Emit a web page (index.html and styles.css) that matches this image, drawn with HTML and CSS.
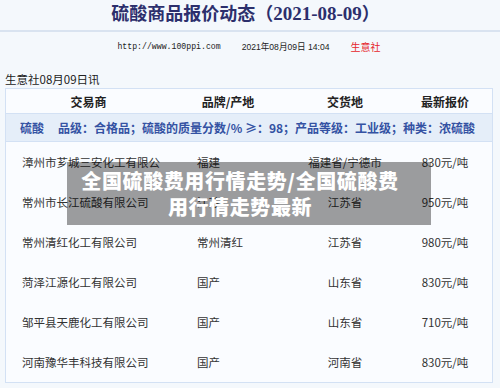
FILE: index.html
```html
<!DOCTYPE html>
<html lang="zh-CN">
<head>
<meta charset="utf-8">
<title>硫酸商品报价动态</title>
<link rel="stylesheet" href="styles.css">
</head>
<body>
<div class="page">
  <h1 class="title">硫酸商品报价动态<span class="paren">（</span><span class="num">2021-08-09</span><span class="paren">）</span></h1>
  <div class="meta">
    <span class="url">http://www.100ppi.com</span>
    <span class="date">2021年08月09日 14:04</span>
    <span class="src">生意社</span>
  </div>
  <p class="lead">生意社08月09日讯</p>
  <div class="table">
    <div class="row head">
      <div class="c1">交易商</div>
      <div class="c2">品牌/产地</div>
      <div class="c3">交货地</div>
      <div class="c4">最新报价</div>
    </div>
    <div class="band"><span class="prod">硫酸</span><span>品级：合格品；硫酸的质量分数/% ≥：98；产品等级：工业级；种类：浓硫酸</span></div>
    <div class="row">
      <div class="c1">漳州市芗城三安化工有限公</div>
      <div class="c2">福建</div>
      <div class="c3">福建省/宁德市</div>
      <div class="c4">830元/吨</div>
    </div>
    <div class="row">
      <div class="c1">常州市长江硫酸有限公司</div>
      <div class="c2">江苏</div>
      <div class="c3">江苏省</div>
      <div class="c4">950元/吨</div>
    </div>
    <div class="row">
      <div class="c1">常州清红化工有限公司</div>
      <div class="c2">常州清红</div>
      <div class="c3">江苏省</div>
      <div class="c4">980元/吨</div>
    </div>
    <div class="row">
      <div class="c1">菏泽江源化工有限公司</div>
      <div class="c2">国产</div>
      <div class="c3">山东省</div>
      <div class="c4">830元/吨</div>
    </div>
    <div class="row">
      <div class="c1">邹平县天鹿化工有限公司</div>
      <div class="c2">国产</div>
      <div class="c3">山东省</div>
      <div class="c4">710元/吨</div>
    </div>
    <div class="row">
      <div class="c1">河南豫华丰科技有限公司</div>
      <div class="c2">国产</div>
      <div class="c3">河南省</div>
      <div class="c4">830元/吨</div>
    </div>
  </div>
  <div class="overlay">全国硫酸费用行情走势/全国硫酸费<br>用行情走势最新</div>
</div>
</body>
</html>
```
FILE: styles.css
```css
* { box-sizing: border-box; }
html, body { margin: 0; padding: 0; }
body {
  background: #f4f8fc;
  font-family: "Noto Sans CJK SC", "Noto Sans", sans-serif;
  color: #333;
  width: 500px;
  height: 388px;
  overflow: hidden;
}
.page { position: relative; height: 388px; }
.title {
  margin: 0;
  height: 32px;
  border-bottom: 2px solid #d9e3f0;
  text-align: center;
  padding-right: 9px;
  font-family: "Noto Sans CJK SC", sans-serif;
  font-weight: 700;
  font-size: 18px;
  line-height: 25px;
  color: #2c2f6c;
}
.title .num { font-family: "Liberation Serif", serif; font-size: 19px; font-weight: 700; }
.meta {
  display: flex;
  justify-content: center;
  align-items: center;
  gap: 21px;
  height: 28px;
  padding-right: 2px;
  font-size: 8.5px;
  color: #222;
}
.meta .url { font-family: "Liberation Mono", monospace; font-size: 8.2px; }
.meta .date { font-family: "Liberation Sans", "Noto Sans CJK SC", sans-serif; font-size: 8.6px; }
.meta .src { color: #e6262b; font-size: 10px; }
.lead {
  margin: 0;
  padding: 11px 0 0 5px;
  height: 28px;
  font-size: 11.5px;
  line-height: 16px;
  color: #222;
}
.table {
  margin-left: 5px;
  width: 488px;
  border: 1px solid #d3e1f4;
  background: #fafcff;
}
.row {
  display: grid;
  grid-template-columns: 165px 114px 120px 80px;
  height: 40px;
  align-items: center;
  font-size: 11.5px;
  color: #333;
}
.row .c1 { padding-left: 16px; white-space: nowrap; }
.row .c2 { padding-left: 26px; white-space: nowrap; }
.row .c3 { text-align: center; white-space: nowrap; }
.row .c4 { text-align: center; white-space: nowrap; }
.row.head {
  height: 25px;
  font-weight: 700;
  font-size: 12px;
  color: #222;
  border-bottom: 1px solid #d3e1f4;
}
.row.head > div { text-align: center; padding-left: 0; }
.band {
  height: 28px;
  display: flex;
  align-items: center;
  background: #e5eef9;
  border-bottom: 1px solid #d3e1f4;
  padding-left: 14px;
  font-size: 12px;
  font-weight: 700;
  color: #3452a3;
  white-space: nowrap;
}
.band .prod { margin-right: 14px; }
.overlay {
  position: absolute;
  left: 67px;
  top: 162px;
  width: 364px;
  height: 63px;
  background: rgba(0, 0, 0, 0.38);
  color: #fff;
  font-weight: 900;
  font-size: 20px;
  letter-spacing: 0.6px;
  line-height: 25.5px;
  text-align: center;
  padding: 6px 18px 0 0;
}
```
